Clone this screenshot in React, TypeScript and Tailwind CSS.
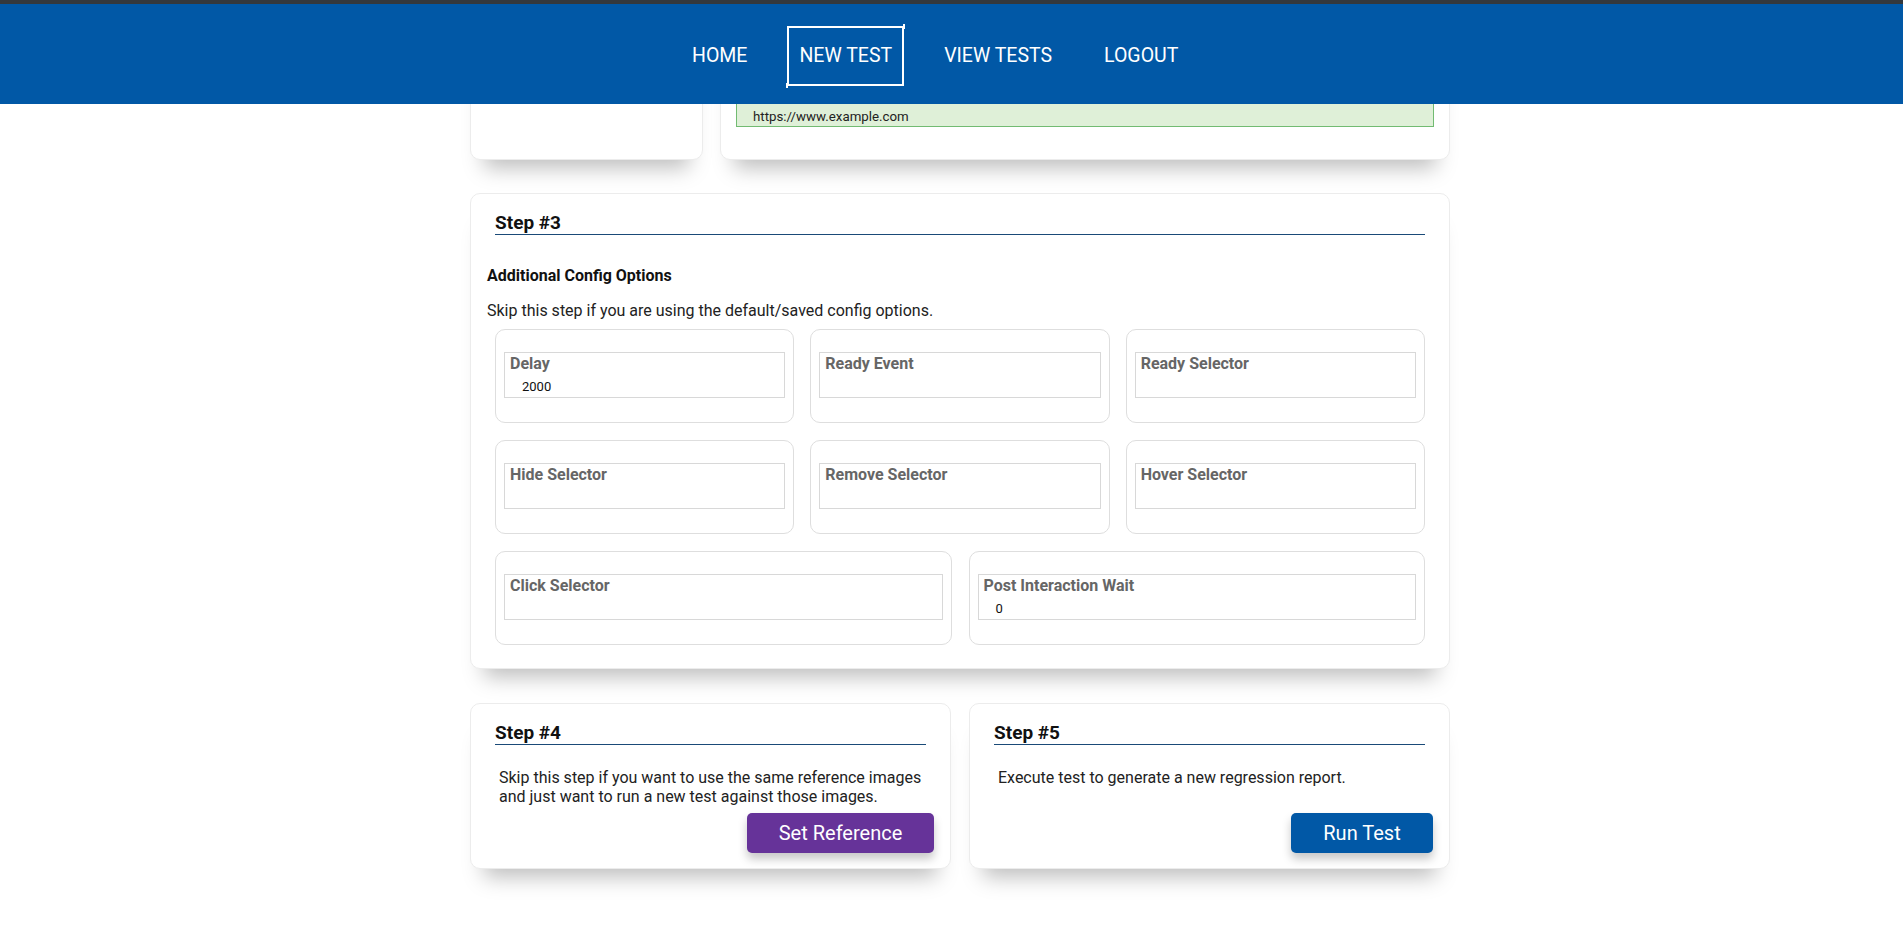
const navItems = ["HOME", "NEW TEST", "VIEW TESTS", "LOGOUT"]

const configRowOne = [
  { label: "Delay", value: "2000" },
  { label: "Ready Event", value: "" },
  { label: "Ready Selector", value: "" },
]
const configRowTwo = [
  { label: "Hide Selector", value: "" },
  { label: "Remove Selector", value: "" },
  { label: "Hover Selector", value: "" },
]
const configRowThree = [
  { label: "Click Selector", value: "" },
  { label: "Post Interaction Wait", value: "0" },
]

const cardClass =
  "bg-white border border-[#ececec] rounded-[10px] shadow-[0_22px_20px_-14px_rgba(0,0,0,0.26)]"

function NavBar() {
  return (
    <nav className="fixed top-0 left-0 right-0 z-10 h-[104px] bg-[#0158a6] border-t-[4px] border-[#34383c]">
      <ul className="flex items-center h-full pt-[4px] ml-[680px] gap-[28px]">
        {navItems.map((item) => (
          <li
            key={item}
            className={
              "relative flex items-center h-[60px] px-[10px] text-[19.5px] text-white border-2 " +
              (item === "NEW TEST" ? "border-white" : "border-transparent")
            }
          >
            {item}
            {item === "NEW TEST" && (
              <>
                <span className="absolute -top-[4px] -right-[3px] w-[2px] h-[5px] bg-white" />
                <span className="absolute -bottom-[4px] -left-[3px] w-[2px] h-[5px] bg-white" />
              </>
            )}
          </li>
        ))}
      </ul>
    </nav>
  )
}

function StepHeading({ title }: { title: string }) {
  return (
    <h2 className="mx-[24px] pb-[1px] text-[19px] leading-[21px] font-bold text-[#111] border-b border-[#1a4a78]">
      {title}
    </h2>
  )
}

function ConfigField({ label, value }: { label: string; value: string }) {
  return (
    <div className="h-[94px] rounded-[10px] border border-[#dedede] px-[8px] pt-[22px]">
      <div className="h-[46px] border border-[#d8d8d8] px-[5px] pt-[1px]">
        <div className="text-[16px] leading-[19px] font-bold text-[#666]">{label}</div>
        <div className="pl-[12px] pt-[6px] text-[13px] leading-[16px] text-[#111]">{value}</div>
      </div>
    </div>
  )
}

export default function App() {
  return (
    <div className="min-h-screen bg-white font-['Roboto',sans-serif]">
      <NavBar />
      <main className="ml-[470px] w-[980px] pb-[60px]">
        <div className="flex gap-[17px]">
          <div className={cardClass + " w-[233px] h-[160px]"} />
          <div className={cardClass + " flex-1 h-[160px] flex flex-col justify-end px-[15px] pb-[32px]"}>
            <div className="h-[30px] bg-[#dff0d8] border border-[#72bb72] flex items-end pl-[16px] text-[13.3px] leading-[18px] text-[#222]">
              https://www.example.com
            </div>
          </div>
        </div>

        <section className={cardClass + " mt-[33px] h-[476px] pt-[18px]"}>
          <StepHeading title="Step #3" />
          <div className="px-[16px] pt-[32px]">
            <h3 className="text-[16px] leading-[18px] font-bold text-[#111]">Additional Config Options</h3>
            <p className="mt-[17px] text-[16px] leading-[18px] text-[#222]">
              Skip this step if you are using the default/saved config options.
            </p>
          </div>
          <div className="px-[24px] pt-[9px] flex flex-col gap-[17px]">
            <div className="grid grid-cols-3 gap-[16px]">
              {configRowOne.map((f) => (
                <ConfigField key={f.label} label={f.label} value={f.value} />
              ))}
            </div>
            <div className="grid grid-cols-3 gap-[16px]">
              {configRowTwo.map((f) => (
                <ConfigField key={f.label} label={f.label} value={f.value} />
              ))}
            </div>
            <div className="grid grid-cols-2 gap-[17px]">
              {configRowThree.map((f) => (
                <ConfigField key={f.label} label={f.label} value={f.value} />
              ))}
            </div>
          </div>
        </section>

        <div className="mt-[34px] flex gap-[18px]">
          <section className={cardClass + " flex-1 h-[166px] pt-[18px] pb-[15px] flex flex-col"}>
            <StepHeading title="Step #4" />
            <p className="mt-[23px] pl-[28px] text-[16px] leading-[19px] text-[#222]">
              Skip this step if you want to use the same reference images
              <br />
              and just want to run a new test against those images.
            </p>
            <button className="mt-auto self-end mr-[16px] w-[187px] h-[40px] rounded-[5px] bg-[#663399] text-white text-[20px] shadow-[0_6px_10px_rgba(0,0,0,0.22)]">
              Set Reference
            </button>
          </section>
          <section className={cardClass + " flex-1 h-[166px] pt-[18px] pb-[15px] flex flex-col"}>
            <StepHeading title="Step #5" />
            <p className="mt-[23px] pl-[28px] text-[16px] leading-[19px] text-[#222]">
              Execute test to generate a new regression report.
            </p>
            <button className="mt-auto self-end mr-[16px] w-[142px] h-[40px] rounded-[5px] bg-[#0158a6] text-white text-[20px] shadow-[0_6px_10px_rgba(0,0,0,0.22)]">
              Run Test
            </button>
          </section>
        </div>
      </main>
    </div>
  )
}
